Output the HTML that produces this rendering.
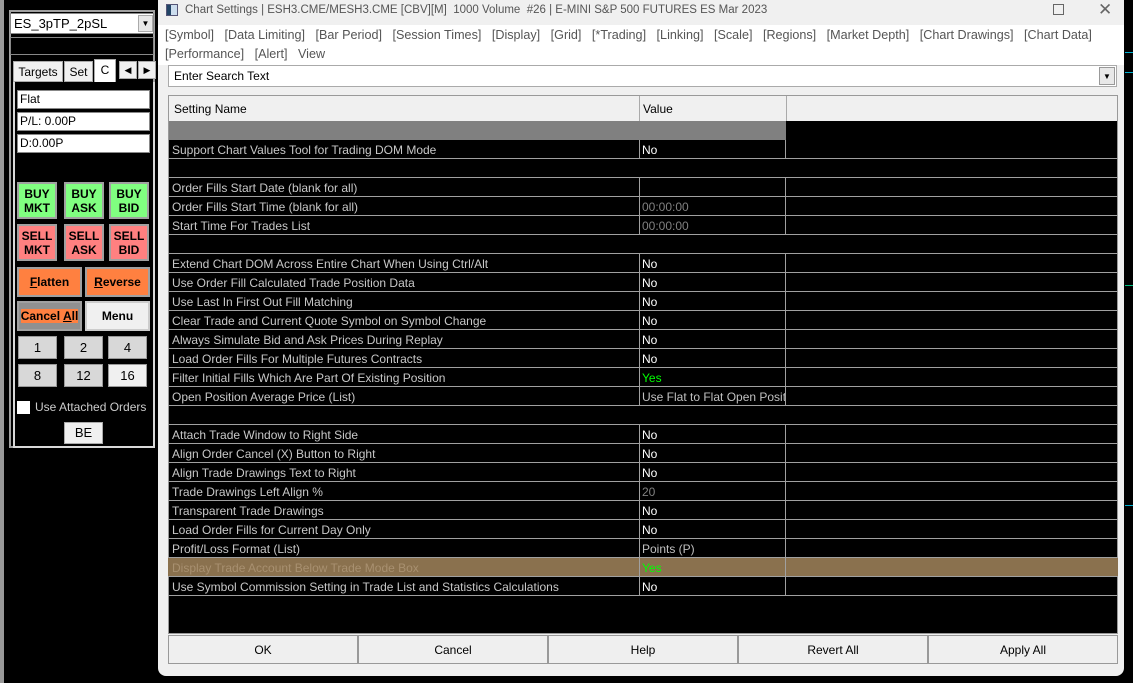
<!DOCTYPE html>
<html><head><meta charset="utf-8"><style>
*{margin:0;padding:0;box-sizing:border-box}
body{width:1133px;height:683px;overflow:hidden;background:#000;font-family:"Liberation Sans",sans-serif;position:relative}
.a{position:absolute}
.btn{position:absolute;text-align:center;font-weight:bold;font-size:12px;color:#000;border:2px solid #a0a0a0;line-height:14px}
.fld{position:absolute;left:17px;width:133px;height:19px;background:#fff;border:1px solid #888;font-size:12px;line-height:17px;padding-left:2px}
.nb{position:absolute;width:39px;height:23px;background:#d8d8d8;border:1px solid #999;font-size:13px;text-align:center;line-height:21px}
.dlg{left:158px;top:0;width:966px;height:676px;background:#f0f0f0;border-radius:0 0 8px 8px}
.menu{font-size:12.6px;color:#555;line-height:21px}
.row{position:absolute;left:168px;width:950px;height:19px;border-bottom:1px solid #a0a0a0;font-size:12px;line-height:20px}
.row .n{position:absolute;left:4px;color:#c8c8c8;white-space:nowrap}
.row .v{position:absolute;left:471px;top:0;width:147px;height:18px;border-left:1px solid #a0a0a0;border-right:1px solid #a0a0a0;padding-left:2px;color:#fff;white-space:nowrap;overflow:hidden}
.bb{position:absolute;top:635px;height:29px;background:#efefef;border:1px solid #999;font-size:12px;text-align:center;line-height:28px}
</style></head><body>
<div class="a" style="left:0;top:0;width:4px;height:683px;background:#999"></div>
<div class="a" style="left:9px;top:10px;width:146px;height:438px;border:2px solid #a0a0a0;background:#000"></div>
<div class="a" style="left:10px;top:13px;width:144px;height:21px;background:#fff;border:1px solid #888;font-size:13px;line-height:19px;padding-left:3px">ES_3pTP_2pSL</div>
<div class="a" style="left:138px;top:15px;width:15px;height:17px;background:#e8e8e8;border:1px solid #aaa;font-size:8px;text-align:center;line-height:16px">▼</div>
<div class="a" style="left:10px;top:37px;width:144px;height:18px;border:1px solid #888;background:#000"></div>
<div class="a" style="left:13px;top:61px;width:50px;height:21px;background:#f0f0f0;border:1px solid #aaa;font-size:12px;line-height:21px;text-align:center">Targets</div>
<div class="a" style="left:64px;top:61px;width:29px;height:21px;background:#f0f0f0;border:1px solid #aaa;font-size:12px;line-height:21px;text-align:center">Set</div>
<div class="a" style="left:94px;top:59px;width:22px;height:24px;background:#fff;border:1px solid #aaa;font-size:12px;line-height:20px;text-align:center">C</div>
<div class="a" style="left:119px;top:61px;width:18px;height:18px;background:#f0f0f0;border:1px solid #aaa;font-size:9px;line-height:16px;text-align:center">◀</div>
<div class="a" style="left:138px;top:61px;width:18px;height:18px;background:#f0f0f0;border:1px solid #aaa;font-size:9px;line-height:16px;text-align:center">▶</div>
<div class="a" style="left:13px;top:82px;width:142px;height:366px;border:2px solid #d8d8d8;border-top:none;background:#000"></div>
<div class="fld" style="top:90px">Flat</div>
<div class="fld" style="top:112px">P/L: 0.00P</div>
<div class="fld" style="top:134px">D:0.00P</div>
<div class="btn" style="left:17px;top:182px;width:40px;height:37px;background:#80ff80;padding-top:3px">BUY<br>MKT</div>
<div class="btn" style="left:64px;top:182px;width:40px;height:37px;background:#80ff80;padding-top:3px">BUY<br>ASK</div>
<div class="btn" style="left:109px;top:182px;width:40px;height:37px;background:#80ff80;padding-top:3px">BUY<br>BID</div>
<div class="btn" style="left:17px;top:224px;width:40px;height:37px;background:#ff8080;padding-top:3px">SELL<br>MKT</div>
<div class="btn" style="left:64px;top:224px;width:40px;height:37px;background:#ff8080;padding-top:3px">SELL<br>ASK</div>
<div class="btn" style="left:109px;top:224px;width:40px;height:37px;background:#ff8080;padding-top:3px">SELL<br>BID</div>
<div class="btn" style="left:17px;top:267px;width:65px;height:30px;background:#ff8040;line-height:26px"><u>F</u>latten</div>
<div class="btn" style="left:85px;top:267px;width:65px;height:30px;background:#ff8040;line-height:26px"><u>R</u>everse</div>
<div class="btn" style="left:17px;top:301px;width:65px;height:30px;background:#909090;line-height:26px"><span style="background:#ff8040">Cancel <u>A</u>ll</span></div>
<div class="btn" style="left:85px;top:301px;width:65px;height:30px;background:#f0f0f0;border-color:#ccc;line-height:26px">Menu</div>
<div class="nb" style="left:18px;top:336px">1</div>
<div class="nb" style="left:64px;top:336px">2</div>
<div class="nb" style="left:108px;top:336px">4</div>
<div class="nb" style="left:18px;top:364px">8</div>
<div class="nb" style="left:64px;top:364px">12</div>
<div class="nb" style="left:108px;top:364px;background:#f0f0f0">16</div>
<div class="a" style="left:17px;top:401px;width:13px;height:13px;background:#fff"></div>
<div class="a" style="left:35px;top:400px;font-size:12px;color:#ccc">Use Attached Orders</div>
<div class="a" style="left:64px;top:422px;width:39px;height:22px;background:#f0f0f0;border:1px solid #aaa;font-size:13px;text-align:center;line-height:20px">BE</div>

<div class="a" style="left:1125px;top:52px;width:8px;height:1px;background:#00b0d0"></div>
<div class="a" style="left:1125px;top:72px;width:8px;height:1px;background:#00b0d0"></div>
<div class="a" style="left:1125px;top:285px;width:8px;height:1px;background:#00c080"></div>
<div class="a" style="left:1125px;top:505px;width:8px;height:1px;background:#00b0d0"></div>

<div class="a dlg"></div>
<div class="a" style="left:166px;top:4px;width:12px;height:12px;border:1px solid #557;background:linear-gradient(90deg,#246 40%,#cde 40%)"></div>
<div class="a" style="left:185px;top:4px;font-size:11.5px;color:#555">Chart Settings | ESH3.CME/MESH3.CME [CBV][M]&nbsp; 1000 Volume&nbsp; #26 | E-MINI S&amp;P 500 FUTURES ES Mar 2023</div>
<div class="a" style="left:1053px;top:4px;width:11px;height:11px;border:1px solid #666"></div>
<div class="a" style="left:1098px;top:0px;font-size:17px;color:#666">✕</div>
<div class="a" style="left:158px;top:25px;width:966px;height:40px;background:#fff"></div>
<div class="a menu" style="left:165px;top:25px">[Symbol]&nbsp;&nbsp; [Data Limiting]&nbsp;&nbsp; [Bar Period]&nbsp;&nbsp; [Session Times]&nbsp;&nbsp; [Display]&nbsp;&nbsp; [Grid]&nbsp;&nbsp; [*Trading]&nbsp;&nbsp; [Linking]&nbsp;&nbsp; [Scale]&nbsp;&nbsp; [Regions]&nbsp;&nbsp; [Market Depth]&nbsp;&nbsp; [Chart Drawings]&nbsp;&nbsp; [Chart Data]</div>
<div class="a menu" style="left:165px;top:44px">[Performance]&nbsp;&nbsp; [Alert]&nbsp;&nbsp; View</div>
<div class="a" style="left:168px;top:65px;width:949px;height:22px;background:#fff;border:1px solid #aaa;font-size:12px;line-height:20px;padding-left:5px">Enter Search Text</div>
<div class="a" style="left:1099px;top:67px;width:16px;height:18px;background:#e8e8e8;border:1px solid #999;font-size:8px;text-align:center;line-height:17px">▼</div>
<div class="a" style="left:168px;top:95px;width:950px;height:539px;background:#000;border:1px solid #999"></div>
<div class="a" style="left:169px;top:96px;width:948px;height:25px;background:#f0f0f0"></div>
<div class="a" style="left:639px;top:96px;width:1px;height:25px;background:#aaa"></div>
<div class="a" style="left:786px;top:96px;width:1px;height:25px;background:#aaa"></div>
<div class="a" style="left:174px;top:102px;font-size:12px">Setting Name</div>
<div class="a" style="left:643px;top:102px;font-size:12px">Value</div>
<div class="a" style="left:169px;top:121px;width:617px;height:19px;background:#808080"></div>

<div class="row" style="top:140px"><span class="n">Support Chart Values Tool for Trading DOM Mode</span><span class="v">No</span></div>
<div class="row" style="top:159px"></div>
<div class="row" style="top:178px"><span class="n">Order Fills Start Date (blank for all)</span><span class="v"></span></div>
<div class="row" style="top:197px"><span class="n">Order Fills Start Time (blank for all)</span><span class="v" style="color:#808080">00:00:00</span></div>
<div class="row" style="top:216px"><span class="n">Start Time For Trades List</span><span class="v" style="color:#808080">00:00:00</span></div>
<div class="row" style="top:235px"></div>
<div class="row" style="top:254px"><span class="n">Extend Chart DOM Across Entire Chart When Using Ctrl/Alt</span><span class="v">No</span></div>
<div class="row" style="top:273px"><span class="n">Use Order Fill Calculated Trade Position Data</span><span class="v">No</span></div>
<div class="row" style="top:292px"><span class="n">Use Last In First Out Fill Matching</span><span class="v">No</span></div>
<div class="row" style="top:311px"><span class="n">Clear Trade and Current Quote Symbol on Symbol Change</span><span class="v">No</span></div>
<div class="row" style="top:330px"><span class="n">Always Simulate Bid and Ask Prices During Replay</span><span class="v">No</span></div>
<div class="row" style="top:349px"><span class="n">Load Order Fills For Multiple Futures Contracts</span><span class="v">No</span></div>
<div class="row" style="top:368px"><span class="n">Filter Initial Fills Which Are Part Of Existing Position</span><span class="v" style="color:#00ff00">Yes</span></div>
<div class="row" style="top:387px"><span class="n">Open Position Average Price (List)</span><span class="v" style="color:#c0c0c0">Use Flat to Flat Open Position</span></div>
<div class="row" style="top:406px"></div>
<div class="row" style="top:425px"><span class="n">Attach Trade Window to Right Side</span><span class="v">No</span></div>
<div class="row" style="top:444px"><span class="n">Align Order Cancel (X) Button to Right</span><span class="v">No</span></div>
<div class="row" style="top:463px"><span class="n">Align Trade Drawings Text to Right</span><span class="v">No</span></div>
<div class="row" style="top:482px"><span class="n">Trade Drawings Left Align %</span><span class="v" style="color:#808080">20</span></div>
<div class="row" style="top:501px"><span class="n">Transparent Trade Drawings</span><span class="v">No</span></div>
<div class="row" style="top:520px"><span class="n">Load Order Fills for Current Day Only</span><span class="v">No</span></div>
<div class="row" style="top:539px"><span class="n">Profit/Loss Format (List)</span><span class="v" style="color:#c0c0c0">Points (P)</span></div>
<div class="row" style="top:558px;background:#8a714e"><span class="n" style="color:#a89070">Display Trade Account Below Trade Mode Box</span><span class="v" style="color:#00ff00">Yes</span></div>
<div class="row" style="top:577px"><span class="n">Use Symbol Commission Setting in Trade List and Statistics Calculations</span><span class="v">No</span></div>

<div class="bb" style="left:168px;width:190px">OK</div>
<div class="bb" style="left:358px;width:190px">Cancel</div>
<div class="bb" style="left:548px;width:190px">Help</div>
<div class="bb" style="left:738px;width:190px">Revert All</div>
<div class="bb" style="left:928px;width:190px">Apply All</div>
</body></html>
